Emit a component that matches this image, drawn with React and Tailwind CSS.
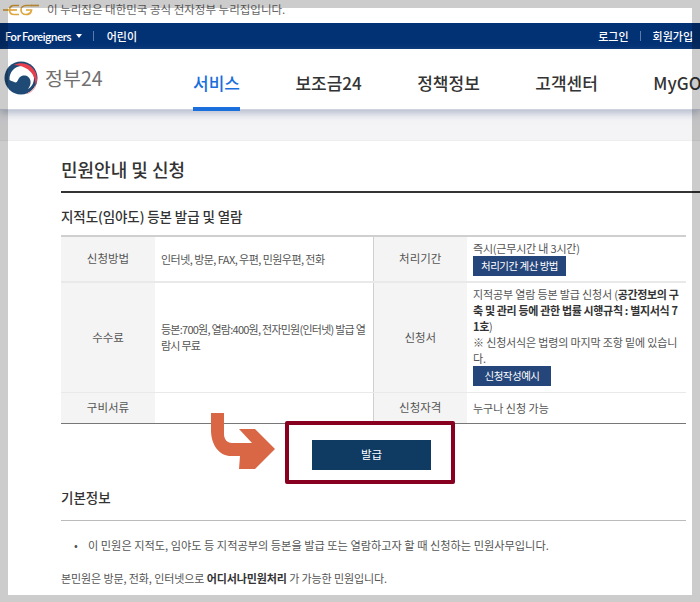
const FONT = 'font-["Noto_Sans_CJK_KR","Noto_Sans",sans-serif]';

const navItems = ['서비스', '보조금24', '정책정보', '고객센터', 'MyGOV'];

function Emblem() {
  return (
    <svg width="34" height="34" viewBox="0 0 34 34" className="shrink-0">
      <circle cx="17" cy="17" r="16.5" fill="#1f4a75" />
      <path d="M5.5 19C5 11 11 5 18 5c7 0 12 5.500 12 12 0 5-2.500 9-6 11 1.500-2 3-5 2.500-8-.500-4-4-6-7.500-5.500-3 .500-4 2.500-5 4.500-1 2.500-2.500 3-4 2-1-.500-2.500-1-4.500-2z" fill="#ffffff" />
      <path d="M10 4C19-1 33 5 33 18c0 3-.500 5-1.500 7 .500-8-4-20-21.500-21z" fill="#e8404f" />
      <path d="M31.500 25c-1.500 3-4 6-8 7.500 4-2 6.500-5 8-7.500z" stroke="#f2a9b0" strokeWidth="1" fill="#f2a9b0" />
    </svg>
  );
}

function GovMark() {
  return (
    <svg width="36" height="12" viewBox="0 0 36 12" fill="none" stroke="#dfa63f" strokeWidth="1.700" className="shrink-0">
      <path d="M0 6h14" />
      <path d="M16 1.500H11C8 1.500 6.500 3.500 6.500 6s1.500 4.500 4.500 4.500h5" />
      <path d="M29 1.500H23c-3 0-5 2-5 4.500s2 4.500 5 4.500c3 0 5-1.500 5.500-4.500H23" />
      <path d="M28 1.500h8" />
    </svg>
  );
}

function Arrow() {
  return (
    <svg width="70" height="60" viewBox="0 0 70 60" className="absolute left-[208px] top-[411px]">
      <path d="M3 2v17c0 16 9 26 20 26h9l-1 13h16l20-20-20-20H31l13 14H24c-5 0-8-4-8-9V2z" fill="#d96645" />
    </svg>
  );
}

function Th({ children, border = '' }) {
  return (
    <th className={`bg-[#f4f4f4] font-normal text-center text-[11.5px] text-[#555] ${border}`}>
      {children}
    </th>
  );
}

function Td({ children, className = '' }) {
  return (
    <td className={`px-[6px] text-[11px] leading-[16px] text-[#555] break-all ${className}`}>
      {children}
    </td>
  );
}

function NavyButton({ children, className }) {
  return (
    <span className={`flex items-center justify-center h-[20px] bg-[#25467a] text-white text-[10.5px] tracking-[-0.5px] ${className}`}>
      {children}
    </span>
  );
}

export default function App() {
  return (
    <div className={`relative w-[700px] h-[602px] overflow-hidden bg-white ${FONT}`}>
      {/* gov banner */}
      <div className="flex items-center gap-[8px] h-[23px] pl-[3px] pb-[4px]">
        <GovMark />
        <span className="text-[11.5px] text-[#666]">이 누리집은 대한민국 공식 전자정부 누리집입니다.</span>
      </div>

      {/* top bar */}
      <div className="flex items-center justify-between h-[26px] bg-[#023174] pl-[5px] pr-[7px] text-[11px] font-medium text-white">
        <div className="flex items-center">
          <span className="tracking-[-0.7px]">For Foreigners</span>
          <span className="ml-[5px] w-0 h-0 border-x-[3.5px] border-x-transparent border-t-[4px] border-t-white" />
          <span className="ml-[11px] mr-[13px] w-px h-[10px] bg-[#5d7cab]" />
          <span>어린이</span>
        </div>
        <div className="flex items-center">
          <span>로그인</span>
          <span className="ml-[11px] mr-[12px] w-px h-[10px] bg-[#5d7cab]" />
          <span>회원가입</span>
        </div>
      </div>

      {/* main nav */}
      <div className="flex h-[61px] bg-white border-b border-b-[#ccd3df] shadow-[0_3px_8px_rgba(120,135,165,0.55)] relative">
        <div className="flex items-center w-[193px] pl-[4px] pb-[2px] shrink-0">
          <Emblem />
          <span className="ml-[7px] text-[19.5px] leading-none text-[#707070]">정부24</span>
        </div>
        <div className="flex gap-[55.5px] whitespace-nowrap">
          {navItems.map((item, i) => (
            <span
              key={item}
              className={`flex items-center h-[62px] pt-[9px] text-[17px] font-medium border-b-[4px] ${
                i === 0 ? 'text-[#1a6fdc] border-b-[#1a6fdc]' : 'text-[#333] border-b-transparent'
              }`}
            >
              {item}
            </span>
          ))}
        </div>
      </div>

      {/* grey strip */}
      <div className="h-[31px] bg-[#f4f4f6] border-b border-b-[#eeeeee]" />

      {/* content */}
      <div className="pl-[61px]">
        <h1 className="pt-[15px] h-[50px] text-[18px] leading-[26px] font-medium text-[#333]">민원안내 및 신청</h1>
        <div className="h-[2px] bg-[#333]" />
        <h2 className="pt-[13px] h-[42px] text-[13.5px] leading-[20px] tracking-[-0.1px] font-medium text-[#333]">지적도(임야도) 등본 발급 및 열람</h2>

        <table className="w-[625px] table-fixed border-collapse border-t-2 border-t-[#cfcfcf] border-b border-b-[#777]">
          <colgroup>
            <col className="w-[94px]" />
            <col className="w-[218px]" />
            <col className="w-[94px]" />
            <col className="w-[219px]" />
          </colgroup>
          <tbody>
            <tr className="h-[46px]">
              <Th border="border-b-2 border-b-[#e9e9e9]">신청방법</Th>
              <Td className="tracking-[-0.55px] border-b-2 border-b-[#e9e9e9] border-r border-r-[#d0d0d0]">인터넷, 방문, FAX, 우편, 민원우편, 전화</Td>
              <Th border="border-b-2 border-b-[#e9e9e9]">처리기간</Th>
              <Td className="align-top pt-[3px] tracking-[-0.2px] border-b-2 border-b-[#e9e9e9]">
                즉시(근무시간 내 3시간)
                <NavyButton className="w-[93px]">처리기간 계산 방법</NavyButton>
              </Td>
            </tr>
            <tr className="h-[110px]">
              <Th border="border-b border-b-[#e9e9e9]">수수료</Th>
              <Td className="tracking-[-0.75px] border-b border-b-[#e9e9e9] border-r border-r-[#d0d0d0]">
                등본:700원, 열람:400원, 전자민원(인터넷) 발급 열람시 무료
              </Td>
              <Th border="border-b border-b-[#e9e9e9]">신청서</Th>
              <Td className="align-top pt-[3px] tracking-[-0.15px] border-b border-b-[#e9e9e9]">
                지적공부 열람 등본 발급 신청서 (<b className="font-bold tracking-[-0.35px] text-[#333]">공간정보의 구축 및 관리 등에 관한 법률 시행규칙 : 별지서식 71호</b>)
                <br />
                ※ 신청서식은 법령의 마지막 조항 밑에 있습니다.
                <NavyButton className="w-[78px]">신청작성예시</NavyButton>
              </Td>
            </tr>
            <tr className="h-[31px]">
              <Th>구비서류</Th>
              <Td className="border-r border-r-[#d0d0d0]" />
              <Th>신청자격</Th>
              <Td>누구나 신청 가능</Td>
            </tr>
          </tbody>
        </table>

        <div className="flex pl-[251px] pt-[16px] h-[58px]">
          <button className="w-[119px] h-[30px] bg-[#0f3b63] text-white text-[11.5px]">발급</button>
        </div>

        <h2 className="pt-[5px] h-[38px] text-[13.5px] leading-[20px] font-medium text-[#333]">기본정보</h2>
        <div className="h-px bg-[#bbb] w-[625px]" />

        <ul className="pt-[16px] pl-[13px] text-[11.2px] leading-[16px] text-[#555]">
          <li className="flex">
            <span className="w-[14px]">•</span>
            <span>이 민원은 지적도, 임야도 등 지적공부의 등본을 발급 또는 열람하고자 할 때 신청하는 민원사무입니다.</span>
          </li>
        </ul>
        <p className="pt-[17px] text-[11px] tracking-[-0.1px] leading-[16px] text-[#555]">
          본민원은 방문, 전화, 인터넷으로 <b className="font-bold text-[#333]">어디서나민원처리</b> 가 가능한 민원입니다.
        </p>
      </div>

      {/* annotations */}
      <Arrow />
      <div className="absolute left-[285px] top-[421px] w-[170px] h-[63px] border-[4px] border-[#87001f] rounded-[2px]" />

      {/* screenshot frame */}
      <div className="absolute inset-0 border-x-[8px] border-t-[8px] border-b-[7px] border-black/20 pointer-events-none" />
    </div>
  );
}
